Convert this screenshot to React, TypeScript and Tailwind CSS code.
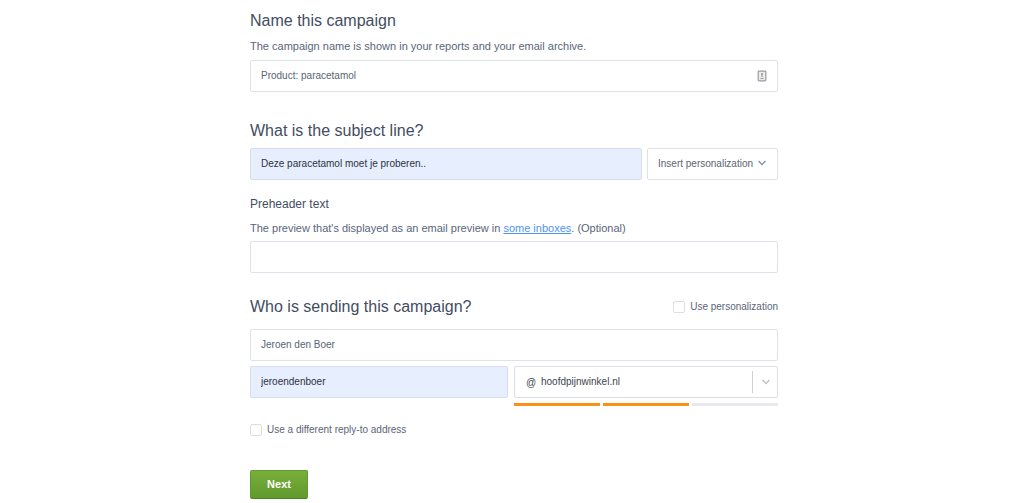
import React from "react";

const box = "h-8 min-w-0 rounded-xs border px-2.5 pb-0.5 text-[10px] outline-none";
const plain = "border-[#dfe2ea] bg-white text-[#5a6472]";
const filled = "border-[#d5dff0] bg-[#e7eefd] text-[#2c333d]";
const heading = "text-base leading-6 text-[#434d5f]";
const hint = "text-[11px] leading-[18px] text-[#596679]";

function Chevron({ className }: { className: string }) {
  return (
    <svg viewBox="0 0 8 6" fill="none" stroke="currentColor" strokeWidth="1.3" className={className} aria-hidden="true">
      <path d="M0.6 1 4 4.6 7.4 1" />
    </svg>
  );
}

function Check({ label }: { label: string }) {
  return (
    <label className="flex items-center gap-[5px] text-[10px] leading-4 text-[#5a6678]">
      <input type="checkbox" className="size-3 appearance-none rounded-xs border border-[#dcdee2] bg-white checked:bg-[#fb8f1b]" />
      {label}
    </label>
  );
}

export default function App() {
  return (
    <main className="min-h-screen bg-white font-['Liberation_Sans',Arial,sans-serif]">
      <form className="mx-auto max-w-[530px] pt-[9px] pr-0.5 pb-1" onSubmit={(e) => e.preventDefault()}>
        <section>
          <h2 className={heading}><label htmlFor="name">Name this campaign</label></h2>
          <p className={`mt-1 mb-[5px] ${hint}`}>The campaign name is shown in your reports and your email archive.</p>
          <div className="relative">
            <input id="name" defaultValue="Product: paracetamol" className={`block w-full ${box} ${plain}`} />
            <svg viewBox="0 0 10 12" className="absolute top-2.5 right-[11px] h-3 w-2.5" aria-hidden="true">
              <rect x="1.2" y="1.2" width="7.6" height="9.6" rx="0.8" fill="#ececec" stroke="#9b9b9b" strokeWidth="1.2" />
              <path d="M5 3v4M4 4h2M3.5 8.5h3" stroke="#8b8b8b" strokeWidth="0.9" />
            </svg>
          </div>
        </section>

        <section className="mt-[27px]">
          <h2 className={`mb-[5px] ${heading}`}><label htmlFor="subject">What is the subject line?</label></h2>
          <div className="flex gap-[5px]">
            <input id="subject" defaultValue="Deze paracetamol moet je proberen.." className={`flex-1 ${box} ${filled}`} />
            <button type="button" className={`flex w-[131px] items-center justify-between ${box} ${plain}`}>
              <span className="whitespace-nowrap">Insert personalization</span>
              <Chevron className="mr-px h-1.5 w-2 text-[#7d8ba3]" />
            </button>
          </div>
        </section>

        <section className="mt-[14px]">
          <h3 className="text-xs leading-5 text-[#434d5f]"><label htmlFor="preheader">Preheader text</label></h3>
          <p className={`mt-[5px] mb-1 ${hint}`}>
            The preview that's displayed as an email preview in{" "}
            <a href="#inboxes" className="text-[#4d94f5] underline">some inboxes</a>. (Optional)
          </p>
          <input id="preheader" className={`block w-full ${box} ${plain}`} />
        </section>

        <section className="mt-[22px]">
          <div className="mb-[10px] flex items-center justify-between">
            <h2 className={heading}>Who is sending this campaign?</h2>
            <Check label="Use personalization" />
          </div>
          <input aria-label="Sender name" defaultValue="Jeroen den Boer" className={`block w-full ${box} ${plain}`} />
          <div className="mt-[5px] flex gap-1.5">
            <input aria-label="Sender address" defaultValue="jeroendenboer" className={`flex-1 ${box} ${filled}`} />
            <div className="w-1/2">
              <div className="relative">
                <select aria-label="Sender domain" className="block h-8 w-full appearance-none rounded-xs border border-[#dcdfe7] bg-white pr-8 pb-0.5 pl-[26px] text-[10px] text-[#3d454f] outline-none">
                  <option>hoofdpijnwinkel.nl</option>
                </select>
                <span className="pointer-events-none absolute inset-y-0 left-3 flex items-center text-[10px] text-[#3d454f]">@</span>
                <span className="pointer-events-none absolute inset-y-[5px] right-0 flex w-[26px] items-center justify-center border-l border-[#cfd1d5]">
                  <Chevron className="h-1.5 w-2 text-[#b9bcc2]" />
                </span>
              </div>
              <div className="mt-[5px] grid grid-cols-3 gap-[3px]">
                <span className="h-[3px] bg-[#fb8f1b]" />
                <span className="h-[3px] bg-[#fb8f1b]" />
                <span className="h-[3px] bg-[#e8e9ef]" />
              </div>
            </div>
          </div>
        </section>

        <div className="mt-4 flex">
          <Check label="Use a different reply-to address" />
        </div>
        <button type="submit" className="mt-8 h-[29px] w-[58px] rounded-xs border border-[#609a2c] border-b-[#4b8523] bg-linear-to-b from-[#7aae3c] to-[#5f9a2c] text-[11px] font-bold text-white">
          Next
        </button>
      </form>
    </main>
  );
}
